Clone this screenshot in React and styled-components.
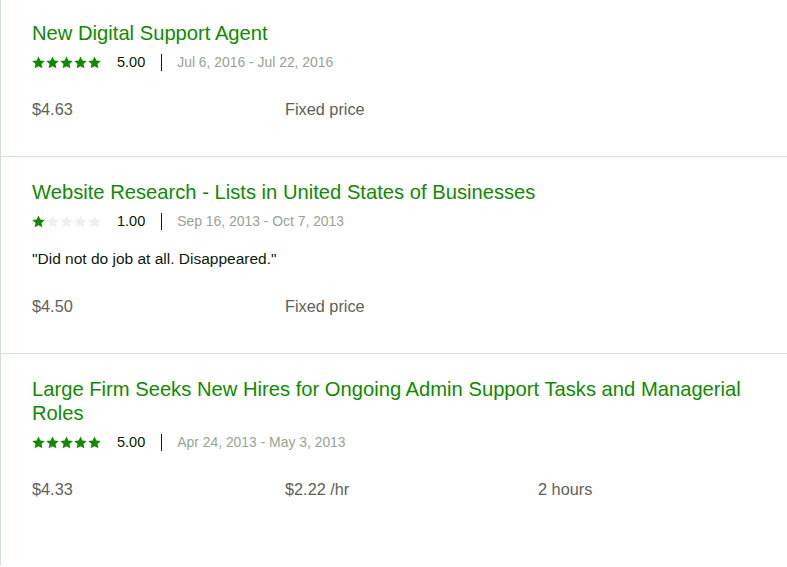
import React from "react";
import styled, { createGlobalStyle } from "styled-components";

const GlobalStyle = createGlobalStyle`
  html, body { margin: 0; padding: 0; background: #ffffff; }
  body { font-family: "Liberation Sans", Arial, sans-serif; overflow: hidden; }
`;

const Page = styled.div`
  min-height: 100vh;
  border-left: 1px solid #d5e0d5;
  box-sizing: border-box;
`;

const List = styled.div`
  margin-top: -2px;
`;

const Item = styled.section`
  padding: 23px 32px 37px 31px;
  border-bottom: 1px solid #d5e0d5;

  &:last-child {
    border-bottom: none;
  }
`;

const Title = styled.h4`
  margin: 0;
  font-size: 20.2px;
  line-height: 24px;
  font-weight: 400;
  color: #108a00;
`;

const RatingRow = styled.div`
  display: flex;
  align-items: center;
  height: 20px;
  margin-top: 7px;
  font-size: 14.5px;
`;

const Stars = styled.div`
  display: flex;
  gap: 1px;
  margin-right: 16px;
`;

const Score = styled.span`
  color: #001e00;
`;

const Sep = styled.span`
  width: 1px;
  height: 17px;
  background: #001e00;
  margin: 0 15px 0 16px;
`;

const Dates = styled.span`
  color: #98a394;
  font-size: 13.9px;
`;

const Comment = styled.p`
  margin: 18px 0 0;
  font-size: 15.5px;
  line-height: 20px;
  color: #0d1a0d;
`;

const Details = styled.div`
  display: grid;
  grid-template-columns: 253px 253px 1fr;
  margin-top: 27px;
  font-size: 16.3px;
  line-height: 20px;
  color: #5d6258;
`;

const Star = ({ filled }) => (
  <svg width="13" height="13" viewBox="0 0 24 24">
    <path
      d="M12 0.8l3.4 7.4 8.2.9-6.1 5.6 1.7 8.1L12 18.7l-7.2 4.1 1.7-8.1L0.4 9.1l8.2-.9z"
      fill={filled ? "#108a00" : "#edf1ec"}
    />
  </svg>
);

const jobs = [
  {
    title: "New Digital Support Agent",
    rating: 5,
    score: "5.00",
    dates: "Jul 6, 2016 - Jul 22, 2016",
    cols: ["$4.63", "Fixed price"],
  },
  {
    title: "Website Research - Lists in United States of Businesses",
    rating: 1,
    score: "1.00",
    dates: "Sep 16, 2013 - Oct 7, 2013",
    comment: '"Did not do job at all. Disappeared."',
    cols: ["$4.50", "Fixed price"],
  },
  {
    title:
      "Large Firm Seeks New Hires for Ongoing Admin Support Tasks and Managerial Roles",
    rating: 5,
    score: "5.00",
    dates: "Apr 24, 2013 - May 3, 2013",
    cols: ["$4.33", "$2.22 /hr", "2 hours"],
  },
];

export default function App() {
  return (
    <Page>
      <GlobalStyle />
      <List>
        {jobs.map((j) => (
          <Item key={j.title}>
            <Title>{j.title}</Title>
            <RatingRow>
              <Stars>
                {[0, 1, 2, 3, 4].map((i) => (
                  <Star key={i} filled={i < j.rating} />
                ))}
              </Stars>
              <Score>{j.score}</Score>
              <Sep />
              <Dates>{j.dates}</Dates>
            </RatingRow>
            {j.comment && <Comment>{j.comment}</Comment>}
            <Details>
              {j.cols.map((c) => (
                <span key={c}>{c}</span>
              ))}
            </Details>
          </Item>
        ))}
      </List>
    </Page>
  );
}
